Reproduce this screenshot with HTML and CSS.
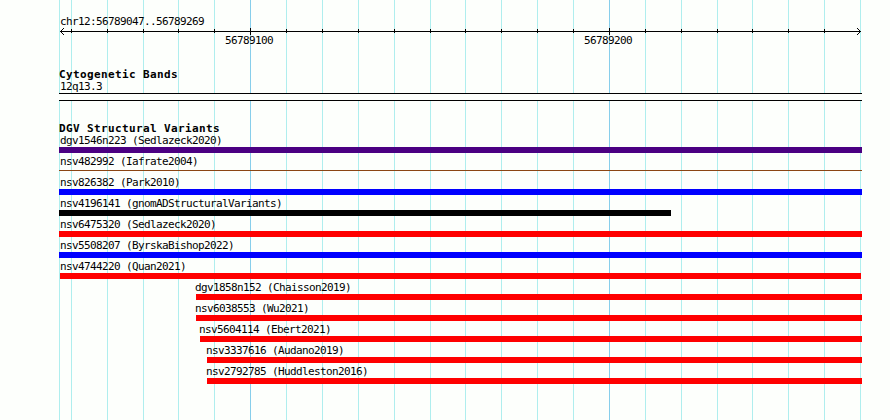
FILE: index.html
```html
<!DOCTYPE html>
<html lang="en">
<head>
<meta charset="utf-8">
<title>chr12:56789047..56789269</title>
<link rel="stylesheet" href="styles.css">
</head>
<body>
<main class="browser">
  <svg class="grid" width="890" height="420" shape-rendering="crispEdges" fill="none" aria-hidden="true">
    <path class="minor" d="M59.5 0V420M71.5 0V420M107.5 0V420M143.5 0V420M178.5 0V420M214.5 0V420M286.5 0V420M322.5 0V420M358.5 0V420M394.5 0V420M430.5 0V420M465.5 0V420M501.5 0V420M537.5 0V420M573.5 0V420M645.5 0V420M681.5 0V420M717.5 0V420M752.5 0V420M788.5 0V420M824.5 0V420M860.5 0V420"/>
    <path class="major" d="M250.5 0V420M609.5 0V420"/>
  </svg>
  <header class="scale">
    <div class="label">chr12:56789047..56789269</div>
    <svg class="ruler" width="803" height="7" shape-rendering="crispEdges" fill="none" aria-hidden="true">
      <path d="M1 3.5H802M12.5 1V5M48.5 1V5M84.5 1V5M119.5 1V5M155.5 1V5M191.5 0V7M227.5 1V5M263.5 1V5M299.5 1V5M335.5 1V5M371.5 1V5M406.5 1V5M442.5 1V5M478.5 1V5M514.5 1V5M550.5 0V7M586.5 1V5M622.5 1V5M658.5 1V5M693.5 1V5M729.5 1V5M765.5 1V5"/>
      <path d="M4 0.5H5M3 1.5H4M2 2.5H3M2 4.5H3M3 5.5H4M4 6.5H5M798 0.5H799M799 1.5H800M800 2.5H801M800 4.5H801M799 5.5H800M798 6.5H799"/>
    </svg>
    <div class="ticks"><span>56789100</span><span>56789200</span></div>
  </header>
  <section class="cyto">
    <h2>Cytogenetic Bands</h2>
    <div class="label">12q13.3</div>
    <div class="band"></div>
  </section>
  <section class="variants">
    <h2>DGV Structural Variants</h2>
    <div class="feature"><div class="label">dgv1546n223 (Sedlazeck2020)</div><div class="bar indigo"></div></div>
    <div class="feature"><div class="label">nsv482992 (Iafrate2004)</div><div class="bar thin"></div></div>
    <div class="feature"><div class="label">nsv826382 (Park2010)</div><div class="bar blue"></div></div>
    <div class="feature short"><div class="label">nsv4196141 (gnomADStructuralVariants)</div><div class="bar black"></div></div>
    <div class="feature"><div class="label">nsv6475320 (Sedlazeck2020)</div><div class="bar red"></div></div>
    <div class="feature"><div class="label">nsv5508207 (ByrskaBishop2022)</div><div class="bar blue"></div></div>
    <div class="feature"><div class="label">nsv4744220 (Quan2021)</div><div class="bar red inset"></div></div>
    <div class="feature from-196"><div class="label">dgv1858n152 (Chaisson2019)</div><div class="bar red"></div></div>
    <div class="feature from-196"><div class="label">nsv6038553 (Wu2021)</div><div class="bar red"></div></div>
    <div class="feature from-200"><div class="label">nsv5604114 (Ebert2021)</div><div class="bar red"></div></div>
    <div class="feature from-207"><div class="label">nsv3337616 (Audano2019)</div><div class="bar red"></div></div>
    <div class="feature from-207"><div class="label">nsv2792785 (Huddleston2016)</div><div class="bar red"></div></div>
  </section>
</main>
</body>
</html>
```
FILE: styles.css
```css
* { box-sizing: border-box; }
body { margin: 0; }
.browser {
  position: relative;
  width: 890px;
  height: 420px;
  padding: 15px 28px 0 59px;
  overflow: hidden;
  background: #fdfffc;
  color: #000;
  font-family: "DejaVu Sans Mono", monospace;
  font-size: 11px;
  letter-spacing: -0.622px;
}
.grid { position: absolute; inset: 0; }
.minor { stroke: #afeeee; }
.major { stroke: #87ceeb; }
.scale, .cyto, .variants { position: relative; }
.label { height: 13px; padding-left: 1px; line-height: 13px; white-space: nowrap; }
.ruler { display: block; stroke: #000; }
.ticks {
  display: flex;
  gap: 311px;
  height: 13px;
  padding-left: 166px;
  line-height: 11px;
}
.ticks span { width: 48px; white-space: nowrap; }
.cyto { margin-top: 20px; }
h2 {
  height: 12px;
  margin: 0;
  font-size: 11px;
  font-weight: bold;
  line-height: 13px;
  letter-spacing: 0.378px;
  white-space: nowrap;
}
.band {
  height: 8px;
  border: solid #000;
  border-width: 1px 0;
  background: #fdfffc;
}
.variants { margin-top: 21px; }
.feature { height: 21px; }
.bar { height: 6px; }
.indigo { background: #4b0082; }
.blue { background: #00f; }
.red { background: #f00; }
.black { background: #000; }
.thin { height: 1px; margin-top: 2px; background: #8b4513; }
.inset { margin: 0 1px; }
.short { width: 612px; }
.from-196 { margin-left: 137px; }
.from-200 { margin-left: 141px; }
.from-207 { margin-left: 148px; }
.from-196 .label, .from-200 .label, .from-207 .label { padding-left: 0; margin-left: -1px; }
```
